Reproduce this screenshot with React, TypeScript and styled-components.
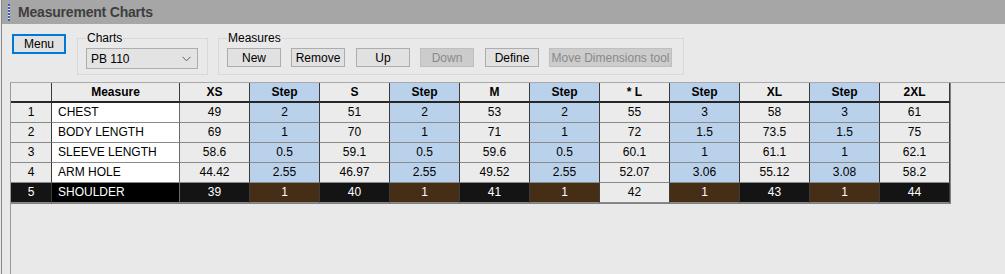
import React from 'react';
import styled, { createGlobalStyle, css } from 'styled-components';

type CellKind = 'rowhead' | 'name' | 'size' | 'step';

type MeasureRow = {
  name: string;
  values: string[];
};

const sizeHeaders = ['XS', 'Step', 'S', 'Step', 'M', 'Step', '* L', 'Step', 'XL', 'Step', '2XL'];
const currentColumn = 6;
const selectedRow = 4;

const rows: MeasureRow[] = [
  { name: 'CHEST', values: ['49', '2', '51', '2', '53', '2', '55', '3', '58', '3', '61'] },
  { name: 'BODY LENGTH', values: ['69', '1', '70', '1', '71', '1', '72', '1.5', '73.5', '1.5', '75'] },
  { name: 'SLEEVE LENGTH', values: ['58.6', '0.5', '59.1', '0.5', '59.6', '0.5', '60.1', '1', '61.1', '1', '62.1'] },
  { name: 'ARM HOLE', values: ['44.42', '2.55', '46.97', '2.55', '49.52', '2.55', '52.07', '3.06', '55.12', '3.08', '58.2'] },
  { name: 'SHOULDER', values: ['39', '1', '40', '1', '41', '1', '42', '1', '43', '1', '44'] },
];

const GlobalStyle = createGlobalStyle`
  html, body {
    margin: 0;
    padding: 0;
    background: #e9e9e9;
  }
  body {
    font-family: "Liberation Sans", Arial, sans-serif;
    font-size: 12px;
    color: #000;
  }
`;

const Window = styled.div`
  display: flex;
  flex-direction: column;
  height: 100vh;
  margin-left: 1px;
  border-left: 1px solid #8a8a8a;
  background: #e9e9e9;
  overflow: hidden;
`;

const TitleBar = styled.div`
  display: flex;
  align-items: center;
  gap: 8px;
  height: 24px;
  padding-left: 6px;
  background: #a6a6a6;
  flex-shrink: 0;
`;

const Grip = styled.div`
  width: 2px;
  height: 17px;
  background: repeating-linear-gradient(to bottom, #3e5fb8 0 2px, #dfe6f5 2px 3px);
`;

const Title = styled.span`
  font-size: 14px;
  font-weight: bold;
  color: #3e3e3e;
  letter-spacing: -0.2px;
`;

const Toolbar = styled.div`
  display: flex;
  align-items: flex-start;
  padding: 7px 0 0 10px;
  flex-shrink: 0;
`;

const MenuButton = styled.button`
  width: 54px;
  height: 20px;
  margin-top: 3px;
  margin-right: 11px;
  padding: 0;
  border: 2px solid #0078d7;
  background: #e1e1e1;
  font-family: inherit;
  font-size: 12px;
  color: #000;
`;

const Group = styled.fieldset<{ $width: number; $bottom: number }>`
  width: ${p => p.$width}px;
  box-sizing: border-box;
  margin: 0 10px 0 0;
  padding: 0 8px ${p => p.$bottom}px 8px;
  border: 1px solid #d8d8d8;
  min-width: 0;
`;

const Legend = styled.legend`
  padding: 0 1px;
  font-size: 12px;
  line-height: 14px;
  color: #000;
`;

const Select = styled.div`
  display: flex;
  align-items: center;
  justify-content: space-between;
  width: 112px;
  height: 21px;
  box-sizing: border-box;
  margin-top: 3px;
  padding: 0 6px 0 4px;
  border: 1px solid #adadad;
  background: #e3e3e3;
`;

const ButtonRow = styled.div`
  display: flex;
  margin-top: 3px;
`;

const ToolButton = styled.button<{ $width: number; $gap: number }>`
  width: ${p => p.$width}px;
  height: 19px;
  margin-right: ${p => p.$gap}px;
  padding: 0;
  border: 1px solid #adadad;
  background: #e1e1e1;
  font-family: inherit;
  font-size: 12px;
  color: #000;

  &:disabled {
    background: #cccccc;
    border-color: #bfbfbf;
    color: #8a8a8a;
  }
`;

const GridPanel = styled.div`
  flex: 1;
  margin: 7px 0 0 8px;
  border-top: 1px solid #a9a9a9;
  border-left: 1px solid #9a9a9a;
`;

const Grid = styled.div`
  display: grid;
  grid-template-columns: 41px 128px repeat(11, 70px);
  grid-auto-rows: 20px;
  width: max-content;
  border-right: 1px solid #808080;
  border-bottom: 1px solid #808080;
`;

const HeaderCell = styled.div<{ $step?: boolean }>`
  display: flex;
  align-items: center;
  justify-content: center;
  box-sizing: border-box;
  border-right: 1px solid #3a3a3a;
  border-bottom: 2px solid #262626;
  background: ${p => (p.$step ? '#b9d1ea' : '#ebebeb')};
  font-weight: bold;
  font-size: 12px;
`;

const palette = {
  rowhead: { bg: '#ebebeb', selBg: '#141414' },
  name: { bg: '#ffffff', selBg: '#000000' },
  size: { bg: '#ebebeb', selBg: '#141414' },
  step: { bg: '#b9d1ea', selBg: '#452d16' },
};

const Cell = styled.div<{ $kind: CellKind; $selected?: boolean }>`
  display: flex;
  align-items: center;
  justify-content: ${p => (p.$kind === 'name' ? 'flex-start' : 'center')};
  box-sizing: border-box;
  padding: ${p => (p.$kind === 'name' ? '0 0 1px 6px' : '0 0 1px 0')};
  border-right: 1px solid ${p => (p.$kind === 'name' ? '#6a6a6a' : '#3a3a3a')};
  border-bottom: 1px solid #8a8a8a;
  background: ${p => palette[p.$kind].bg};
  white-space: nowrap;

  ${p =>
    p.$selected &&
    css`
      background: ${palette[p.$kind].selBg};
      color: #fff;
    `}
`;

const Chevron = () => (
  <svg width="9" height="6" viewBox="0 0 9 6">
    <path d="M0.5 0.8 L4.5 4.8 L8.5 0.8" fill="none" stroke="#606060" strokeWidth="1" />
  </svg>
);

const App = () => {
  return (
    <>
      <GlobalStyle />
      <Window>
        <TitleBar>
          <Grip />
          <Title>Measurement Charts</Title>
        </TitleBar>
        <Toolbar>
          <MenuButton>Menu</MenuButton>
          <Group $width={131} $bottom={5}>
            <Legend>Charts</Legend>
            <Select>
              <span>PB 110</span>
              <Chevron />
            </Select>
          </Group>
          <Group $width={466} $bottom={7}>
            <Legend>Measures</Legend>
            <ButtonRow>
              <ToolButton $width={54} $gap={10}>New</ToolButton>
              <ToolButton $width={54} $gap={11}>Remove</ToolButton>
              <ToolButton $width={54} $gap={10}>Up</ToolButton>
              <ToolButton $width={54} $gap={11} disabled>Down</ToolButton>
              <ToolButton $width={54} $gap={10}>Define</ToolButton>
              <ToolButton $width={123} $gap={0} disabled>Move Dimensions tool</ToolButton>
            </ButtonRow>
          </Group>
        </Toolbar>
        <GridPanel>
          <Grid>
            <HeaderCell />
            <HeaderCell>Measure</HeaderCell>
            {sizeHeaders.map((h, i) => (
              <HeaderCell key={i} $step={h === 'Step'}>
                {h}
              </HeaderCell>
            ))}
            {rows.map((row, r) => {
              const selected = r === selectedRow;
              return (
                <React.Fragment key={row.name}>
                  <Cell $kind="rowhead" $selected={selected}>{r + 1}</Cell>
                  <Cell $kind="name" $selected={selected}>{row.name}</Cell>
                  {row.values.map((v, c) => (
                    <Cell
                      key={c}
                      $kind={sizeHeaders[c] === 'Step' ? 'step' : 'size'}
                      $selected={selected && c !== currentColumn}
                    >
                      {v}
                    </Cell>
                  ))}
                </React.Fragment>
              );
            })}
          </Grid>
        </GridPanel>
      </Window>
    </>
  );
};

export default App;
